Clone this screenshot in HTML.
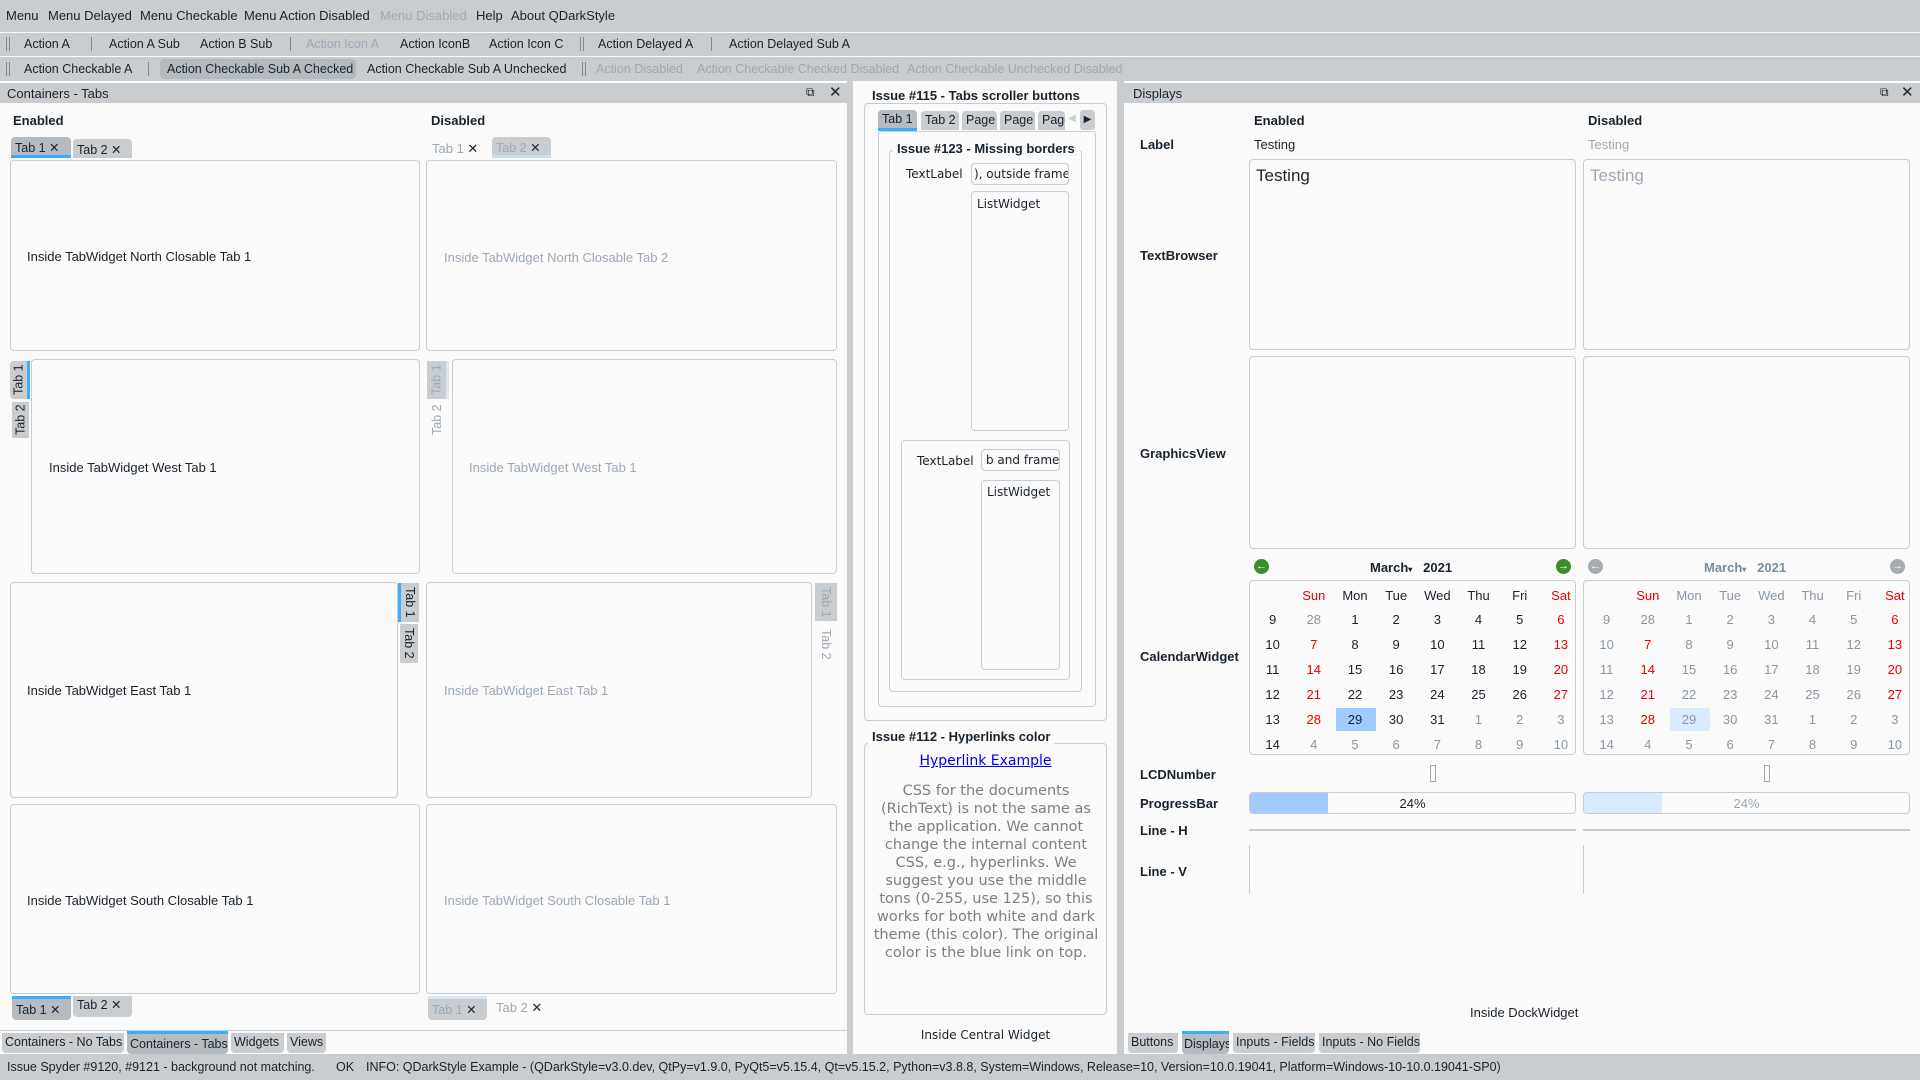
<!DOCTYPE html>
<html><head><meta charset="utf-8"><style>
*{box-sizing:border-box;margin:0;padding:0}
body{width:1920px;height:1080px;position:relative;overflow:hidden;background:#fafafa;font-family:"Liberation Sans",sans-serif;font-size:13px;color:#19232d}
.a{position:absolute;white-space:nowrap}
.bar{background:#c9cdd0}
.dis{color:#9da9b5}
.b{font-weight:bold}
.box{position:absolute;border:1px solid #c9cdd0;border-radius:4px;background:#fafafa}
.tab{position:absolute;background:#c9cdd0;border-radius:4px 4px 0 0;padding:3px 0 0 4px;height:21px;white-space:nowrap;overflow:hidden;font-size:12.5px}
.tabs{background:#b6bbbf}
.vt{position:absolute;background:#c9cdd0;writing-mode:vertical-rl;display:flex;align-items:center;justify-content:center;font-size:12.5px}
.west{transform:rotate(180deg)}
.sep{position:absolute;width:1px;height:14px;background:#788d9c}
.hd{position:absolute;width:4px;height:14px;border-left:1px solid #788d9c;border-right:1px solid #788d9c}
.tb{position:absolute;white-space:nowrap;font-size:12.5px}
.cal{position:absolute;display:grid;grid-template-columns:repeat(8,41.2px);grid-template-rows:24px repeat(6,25px);font-size:13px}
.cal div{display:flex;align-items:center;justify-content:center}
.r{color:#e00}.g{color:#8a97a3}
.cald div{color:#8a97a3}.cald .r{color:#e00}
.dj{font-family:"DejaVu Sans",sans-serif;font-size:12px}
</style></head><body>
<!-- menubar -->
<div class="a bar" style="left:0;top:0;width:1920px;height:32px"></div>
<div class="a" style="left:6px;top:8px">Menu</div>
<div class="a" style="left:48px;top:8px">Menu Delayed</div>
<div class="a" style="left:140px;top:8px">Menu Checkable</div>
<div class="a" style="left:244px;top:8px">Menu Action Disabled</div>
<div class="a dis" style="left:380px;top:8px">Menu Disabled</div>
<div class="a" style="left:476px;top:8px">Help</div>
<div class="a" style="left:511px;top:8px">About QDarkStyle</div>
<!-- toolbar 1 -->
<div class="a bar" style="left:0;top:33px;width:1920px;height:23px"></div>
<div class="hd" style="left:6px;top:37px"></div>
<div class="tb" style="left:24px;top:37px">Action A</div>
<div class="sep" style="left:91px;top:37px"></div>
<div class="tb" style="left:109px;top:37px">Action A Sub</div>
<div class="tb" style="left:200px;top:37px">Action B Sub</div>
<div class="sep" style="left:290px;top:37px"></div>
<div class="tb dis" style="left:306px;top:37px">Action Icon A</div>
<div class="tb" style="left:400px;top:37px">Action IconB</div>
<div class="tb" style="left:489px;top:37px">Action Icon C</div>
<div class="hd" style="left:580px;top:37px"></div>
<div class="tb" style="left:598px;top:37px">Action Delayed A</div>
<div class="sep" style="left:711px;top:37px"></div>
<div class="tb" style="left:729px;top:37px">Action Delayed Sub A</div>
<!-- toolbar 2 -->
<div class="a bar" style="left:0;top:57px;width:1920px;height:24px"></div>
<div class="hd" style="left:6px;top:62px"></div>
<div class="tb" style="left:24px;top:62px">Action Checkable A</div>
<div class="sep" style="left:148px;top:62px"></div>
<div class="a" style="left:160px;top:59px;width:196px;height:20px;background:#b4b9bd;border-radius:4px"></div>
<div class="tb" style="left:167px;top:62px">Action Checkable Sub A Checked</div>
<div class="tb" style="left:367px;top:62px">Action Checkable Sub A Unchecked</div>
<div class="hd" style="left:582px;top:62px"></div>
<div class="tb dis" style="left:596px;top:62px">Action Disabled</div>
<div class="tb dis" style="left:697px;top:62px">Action Checkable Checked Disabled</div>
<div class="tb dis" style="left:907px;top:62px">Action Checkable Unchecked Disabled</div>
<!-- splitters -->
<div class="a bar" style="left:847px;top:81px;width:6px;height:973px"></div>
<div class="a bar" style="left:1117px;top:81px;width:7px;height:973px"></div>
<!-- left dock -->
<div class="a bar" style="left:0;top:83px;width:847px;height:20px"></div>
<div class="a" style="left:7px;top:86px">Containers - Tabs</div>
<div class="a" style="left:806px;top:85px;font-size:12px">&#x29C9;</div>
<div class="a" style="left:829px;top:83px;font-size:15px">✕</div>
<div class="a b" style="left:13px;top:113px">Enabled</div>
<div class="a b" style="left:431px;top:113px">Disabled</div>
<!-- north -->
<div class="tab tabs" style="left:11px;top:137px;width:60px;border-bottom:3px solid #37aefe">Tab 1 ✕</div>
<div class="tab" style="left:73px;top:139px;width:59px;height:19px">Tab 2 ✕</div>
<div class="a dis" style="left:432px;top:141px">Tab 1 <span style="color:#19232d">✕</span></div>
<div class="tab dis" style="left:492px;top:137px;width:59px;border-bottom:3px solid #c6e0f5">Tab 2 <span style="color:#19232d">✕</span></div>
<div class="box" style="left:10px;top:160px;width:410px;height:191px"></div>
<div class="a" style="left:27px;top:249px">Inside TabWidget North Closable Tab 1</div>
<div class="box" style="left:426px;top:160px;width:411px;height:191px"></div>
<div class="a dis" style="left:444px;top:250px">Inside TabWidget North Closable Tab 2</div>
<!-- west -->
<div class="vt west tabs" style="left:10px;top:361px;width:20px;height:38px;border-left:3px solid #37aefe;border-radius:0 4px 4px 0">Tab 1</div>
<div class="vt west" style="left:12px;top:402px;width:17px;height:36px">Tab 2</div>
<div class="box" style="left:31px;top:359px;width:389px;height:215px"></div>
<div class="a" style="left:49px;top:460px">Inside TabWidget West Tab 1</div>
<div class="vt west dis" style="left:427px;top:361px;width:22px;height:38px;border-left:3px solid #d6e8f8">Tab 1</div>
<div class="vt west dis" style="left:427px;top:402px;width:20px;height:36px;background:none">Tab 2</div>
<div class="box" style="left:452px;top:359px;width:385px;height:215px"></div>
<div class="a dis" style="left:469px;top:460px">Inside TabWidget West Tab 1</div>
<!-- east -->
<div class="box" style="left:10px;top:582px;width:388px;height:216px"></div>
<div class="vt tabs" style="left:398px;top:583px;width:21px;height:39px;border-left:3px solid #37aefe">Tab 1</div>
<div class="vt" style="left:400px;top:624px;width:18px;height:39px">Tab 2</div>
<div class="a" style="left:27px;top:683px">Inside TabWidget East Tab 1</div>
<div class="box" style="left:426px;top:582px;width:386px;height:216px"></div>
<div class="vt dis" style="left:815px;top:583px;width:22px;height:38px">Tab 1</div>
<div class="vt dis" style="left:815px;top:624px;width:22px;height:40px;background:none">Tab 2</div>
<div class="a dis" style="left:444px;top:683px">Inside TabWidget East Tab 1</div>
<!-- south -->
<div class="box" style="left:10px;top:804px;width:410px;height:190px"></div>
<div class="a" style="left:27px;top:893px">Inside TabWidget South Closable Tab 1</div>
<div class="box" style="left:426px;top:804px;width:411px;height:190px"></div>
<div class="a dis" style="left:444px;top:893px">Inside TabWidget South Closable Tab 1</div>
<div class="tab tabs" style="left:12px;top:996px;width:59px;height:24px;border-top:3px solid #37aefe;border-radius:0 0 4px 4px;padding-top:3px">Tab 1 ✕</div>
<div class="tab" style="left:73px;top:996px;width:59px;height:21px;border-radius:0 0 4px 4px;padding-top:1px">Tab 2 ✕</div>
<div class="tab dis" style="left:428px;top:996px;width:59px;height:24px;border-top:3px solid #d6e8f8;border-radius:0 0 4px 4px;padding-top:3px">Tab 1 <span style="color:#19232d">✕</span></div>
<div class="a dis" style="left:496px;top:1000px">Tab 2 <span style="color:#19232d">✕</span></div>
<!-- left dock bottom tabs -->
<div class="a" style="left:0;top:1030px;width:847px;height:1px;background:#c9cdd0"></div>
<div class="tab" style="left:2px;top:1033px;width:122px;height:20px;border-radius:0 0 4px 4px;padding:2px 0 0 3px">Containers - No Tabs</div>
<div class="tab tabs" style="left:127px;top:1031px;width:101px;height:23px;border-top:3px solid #37aefe;border-radius:0 0 4px 4px;padding:3px 0 0 3px">Containers - Tabs</div>
<div class="tab" style="left:231px;top:1033px;width:53px;height:20px;border-radius:0 0 4px 4px;padding:2px 0 0 3px">Widgets</div>
<div class="tab" style="left:287px;top:1033px;width:39px;height:20px;border-radius:0 0 4px 4px;padding:2px 0 0 3px">Views</div>
<!-- central -->
<div class="box" style="left:864px;top:103px;width:243px;height:618px"></div>
<div class="a b" style="left:868px;top:88px;background:#fafafa;padding:0 4px">Issue #115 - Tabs scroller buttons</div>
<div class="tab tabs" style="left:878px;top:110px;width:39px;height:21px;border-bottom:3px solid #37aefe;padding-top:2px">Tab 1</div>
<div class="tab" style="left:921px;top:111px;width:38px;height:19px;padding-top:2px">Tab 2</div>
<div class="tab" style="left:962px;top:111px;width:35px;height:19px;padding-top:2px">Page</div>
<div class="tab" style="left:1000px;top:111px;width:35px;height:19px;padding-top:2px">Page</div>
<div class="tab" style="left:1038px;top:111px;width:27px;height:19px;padding-top:2px">Page</div>
<div class="a" style="left:1068px;top:113px;color:#c9cdd0;font-size:10px">◀</div>
<div class="a" style="left:1080px;top:110px;width:15px;height:20px;background:#c9cdd0;border-radius:3px;font-size:10px;text-align:center;padding-top:4px">▶</div>
<div class="box" style="left:878px;top:131px;width:218px;height:576px"></div>
<div class="box" style="left:889px;top:150px;width:193px;height:542px"></div>
<div class="a b" style="left:893px;top:141px;background:#fafafa;padding:0 4px">Issue #123 - Missing borders</div>
<div class="a dj" style="left:906px;top:167px">TextLabel</div>
<div class="box" style="left:971px;top:163px;width:98px;height:22px;overflow:hidden"><div class="a dj" style="left:2px;top:3px">), outside frame</div></div>
<div class="box" style="left:971px;top:191px;width:98px;height:240px"></div>
<div class="a dj" style="left:977px;top:197px">ListWidget</div>
<div class="box" style="left:901px;top:440px;width:169px;height:240px"></div>
<div class="a dj" style="left:917px;top:454px">TextLabel</div>
<div class="box" style="left:981px;top:449px;width:79px;height:22px;overflow:hidden"><div class="a dj" style="left:4px;top:3px">b and frame</div></div>
<div class="box" style="left:981px;top:480px;width:79px;height:190px"></div>
<div class="a dj" style="left:987px;top:485px">ListWidget</div>
<div class="box" style="left:864px;top:743px;width:243px;height:272px"></div>
<div class="a b" style="left:868px;top:729px;background:#fafafa;padding:0 4px">Issue #112 - Hyperlinks color</div>
<div class="a dj" style="left:864px;top:753px;width:243px;text-align:center;color:#00e;text-decoration:underline;font-size:14px">Hyperlink Example</div>
<div class="a dj" style="left:873px;top:782px;width:226px;text-align:center;color:#7f7f7f;font-size:14.5px;line-height:18px;white-space:normal">CSS for the documents (RichText) is not the same as the application. We cannot change the internal content CSS, e.g., hyperlinks. We suggest you use the middle tons (0-255, use 125), so this works for both white and dark theme (this color). The original color is the blue link on top.</div>
<div class="a dj" style="left:864px;top:1028px;width:243px;text-align:center">Inside Central Widget</div>
<!-- right dock -->
<div class="a bar" style="left:1124px;top:83px;width:796px;height:20px"></div>
<div class="a" style="left:1133px;top:86px">Displays</div>
<div class="a" style="left:1880px;top:85px;font-size:12px">&#x29C9;</div>
<div class="a" style="left:1901px;top:83px;font-size:15px">✕</div>
<div class="a b" style="left:1254px;top:113px">Enabled</div>
<div class="a b" style="left:1588px;top:113px">Disabled</div>
<div class="a b" style="left:1140px;top:137px">Label</div>
<div class="a b" style="left:1140px;top:248px">TextBrowser</div>
<div class="a b" style="left:1140px;top:446px">GraphicsView</div>
<div class="a b" style="left:1140px;top:649px">CalendarWidget</div>
<div class="a b" style="left:1140px;top:767px">LCDNumber</div>
<div class="a b" style="left:1140px;top:796px">ProgressBar</div>
<div class="a b" style="left:1140px;top:823px">Line - H</div>
<div class="a b" style="left:1140px;top:864px">Line - V</div>
<div class="a" style="left:1254px;top:137px">Testing</div>
<div class="a dis" style="left:1588px;top:137px">Testing</div>
<div class="box" style="left:1249px;top:159px;width:327px;height:191px"></div>
<div class="a" style="left:1256px;top:166px;font-size:17px">Testing</div>
<div class="box" style="left:1583px;top:159px;width:327px;height:191px"></div>
<div class="a dis" style="left:1590px;top:166px;font-size:17px">Testing</div>
<div class="box" style="left:1249px;top:356px;width:327px;height:193px"></div>
<div class="box" style="left:1583px;top:356px;width:327px;height:193px"></div>
<!-- calendar nav -->
<div class="a" style="left:1254px;top:559px;width:15px;height:15px;border-radius:50%;background:#3a8f2a;color:#fff;font-size:11px;text-align:center;line-height:15px;font-weight:bold">&#x2190;</div>
<div class="a" style="left:1556px;top:559px;width:15px;height:15px;border-radius:50%;background:#3a8f2a;color:#fff;font-size:11px;text-align:center;line-height:15px;font-weight:bold">&#x2192;</div>
<div class="a b" style="left:1370px;top:560px">March<span style="font-size:8px">▾</span>&nbsp;&nbsp; 2021</div>
<div class="a" style="left:1588px;top:559px;width:15px;height:15px;border-radius:50%;background:#a8acaf;color:#fff;font-size:11px;text-align:center;line-height:15px;font-weight:bold">&#x2190;</div>
<div class="a" style="left:1890px;top:559px;width:15px;height:15px;border-radius:50%;background:#a8acaf;color:#fff;font-size:11px;text-align:center;line-height:15px;font-weight:bold">&#x2192;</div>
<div class="a b" style="left:1704px;top:560px;color:#788d9c">March<span style="font-size:8px">▾</span>&nbsp;&nbsp; 2021</div>
<div class="box" style="left:1249px;top:580px;width:327px;height:175px;overflow:hidden">
<div class="a" style="left:86px;top:127px;width:40px;height:23px;background:#9fcbff"></div>
<div class="cal" style="left:2px;top:2px">
<div></div><div class="r">Sun</div><div>Mon</div><div>Tue</div><div>Wed</div><div>Thu</div><div>Fri</div><div class="r">Sat</div>
<div>9</div><div class="g">28</div><div>1</div><div>2</div><div>3</div><div>4</div><div>5</div><div class="r">6</div>
<div>10</div><div class="r">7</div><div>8</div><div>9</div><div>10</div><div>11</div><div>12</div><div class="r">13</div>
<div>11</div><div class="r">14</div><div>15</div><div>16</div><div>17</div><div>18</div><div>19</div><div class="r">20</div>
<div>12</div><div class="r">21</div><div>22</div><div>23</div><div>24</div><div>25</div><div>26</div><div class="r">27</div>
<div>13</div><div class="r">28</div><div>29</div><div>30</div><div>31</div><div class="g">1</div><div class="g">2</div><div class="g">3</div>
<div>14</div><div class="g">4</div><div class="g">5</div><div class="g">6</div><div class="g">7</div><div class="g">8</div><div class="g">9</div><div class="g">10</div>
</div></div>
<div class="box" style="left:1583px;top:580px;width:327px;height:175px;overflow:hidden">
<div class="a" style="left:86px;top:127px;width:40px;height:23px;background:#daeaff"></div>
<div class="cal cald" style="left:2px;top:2px">
<div></div><div class="r">Sun</div><div>Mon</div><div>Tue</div><div>Wed</div><div>Thu</div><div>Fri</div><div class="r">Sat</div>
<div>9</div><div>28</div><div>1</div><div>2</div><div>3</div><div>4</div><div>5</div><div class="r">6</div>
<div>10</div><div class="r">7</div><div>8</div><div>9</div><div>10</div><div>11</div><div>12</div><div class="r">13</div>
<div>11</div><div class="r">14</div><div>15</div><div>16</div><div>17</div><div>18</div><div>19</div><div class="r">20</div>
<div>12</div><div class="r">21</div><div>22</div><div>23</div><div>24</div><div>25</div><div>26</div><div class="r">27</div>
<div>13</div><div class="r">28</div><div>29</div><div>30</div><div>31</div><div>1</div><div>2</div><div>3</div>
<div>14</div><div>4</div><div>5</div><div>6</div><div>7</div><div>8</div><div>9</div><div>10</div>
</div></div>
<!-- LCD -->
<div class="a" style="left:1430px;top:765px;width:6px;height:17px;border:1px solid #9da9b5"></div>
<div class="a" style="left:1764px;top:765px;width:6px;height:17px;border:1px solid #9da9b5"></div>
<!-- progress -->
<div class="box" style="left:1249px;top:792px;width:327px;height:22px;overflow:hidden"><div class="a" style="left:0;top:0;width:78px;height:20px;background:#9fcbff"></div><div class="a" style="left:0;top:3px;width:325px;text-align:center">24%</div></div>
<div class="box" style="left:1583px;top:792px;width:327px;height:22px;overflow:hidden"><div class="a" style="left:0;top:0;width:78px;height:20px;background:#daeaff"></div><div class="a dis" style="left:0;top:3px;width:325px;text-align:center">24%</div></div>
<!-- lines -->
<div class="a" style="left:1249px;top:829px;width:327px;height:2px;background:#c9cdd0"></div>
<div class="a" style="left:1583px;top:829px;width:327px;height:2px;background:#c9cdd0"></div>
<div class="a" style="left:1249px;top:845px;width:1px;height:49px;background:#c9cdd0"></div>
<div class="a" style="left:1583px;top:845px;width:1px;height:49px;background:#c9cdd0"></div>
<div class="a" style="left:1470px;top:1005px">Inside DockWidget</div>
<!-- right bottom tabs -->
<div class="tab" style="left:1128px;top:1033px;width:50px;height:20px;border-radius:0 0 4px 4px;padding:2px 0 0 3px">Buttons</div>
<div class="tab tabs" style="left:1182px;top:1031px;width:47px;height:23px;border-top:3px solid #37aefe;border-radius:0 0 4px 4px;padding:3px 0 0 2px">Displays</div>
<div class="tab" style="left:1233px;top:1033px;width:82px;height:20px;border-radius:0 0 4px 4px;padding:2px 0 0 3px">Inputs - Fields</div>
<div class="tab" style="left:1319px;top:1033px;width:101px;height:20px;border-radius:0 0 4px 4px;padding:2px 0 0 3px">Inputs - No Fields</div>
<!-- status -->
<div class="a bar" style="left:0;top:1054px;width:1920px;height:26px"></div>
<div class="a" style="left:7px;top:1060px;font-size:12.5px">Issue Spyder #9120, #9121 - background not matching.</div>
<div class="a" style="left:336px;top:1060px;font-size:12.5px">OK</div>
<div class="a" style="left:366px;top:1060px;font-size:12.5px">INFO: QDarkStyle Example - (QDarkStyle=v3.0.dev, QtPy=v1.9.0, PyQt5=v5.15.4, Qt=v5.15.2, Python=v3.8.8, System=Windows, Release=10, Version=10.0.19041, Platform=Windows-10-10.0.19041-SP0)</div>
</body></html>
